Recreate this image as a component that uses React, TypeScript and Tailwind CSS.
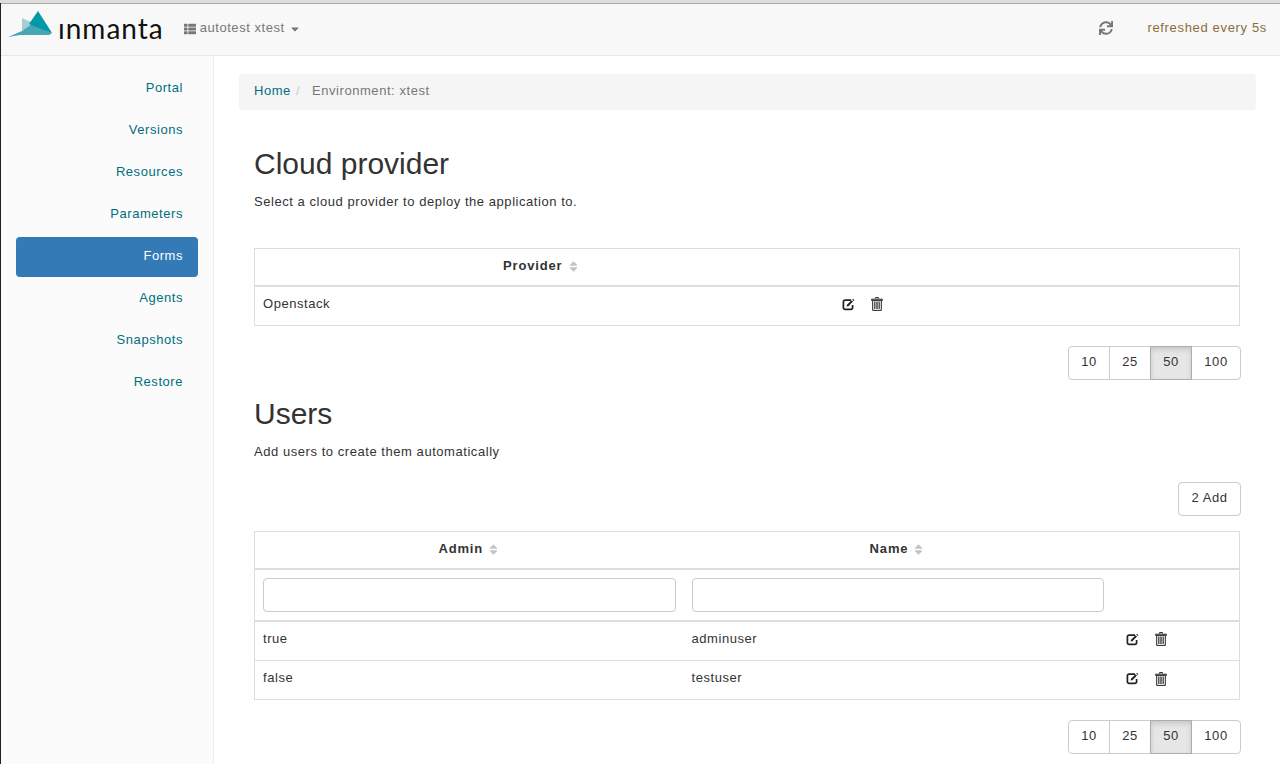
import { FaCaretDown, FaSort, FaSync, FaThList } from "react-icons/fa"

const NAV = ["Portal", "Versions", "Resources", "Parameters", "Forms", "Agents", "Snapshots", "Restore"]

function Logo() {
  return (
    <svg width="46" height="30" viewBox="0 0 46 30" className="mb-[9px] shrink-0">
      <path d="M14 8 L25 13 L19 24 L14 20 Z" fill="#a5cfd6" />
      <path d="M0 27 L14 21 L24 14 L44 23 L41 25 L12 25 Z" fill="#46a6b4" />
      <path d="M21 14 L30 1 L44 23 L28 17 Z" fill="#009aa6" />
    </svg>
  )
}

function EditIcon() {
  return (
    <svg width="13" height="13" viewBox="0 0 13 13" className="text-[#222]">
      <path d="M9 2.2H3a1.6 1.6 0 0 0-1.6 1.6v6A1.6 1.6 0 0 0 3 11.4h6a1.6 1.6 0 0 0 1.6-1.6V7" fill="none" stroke="currentColor" strokeWidth="1.7" />
      <path d="M5 6.8 9.6 2.2 11 3.6 6.4 8.2 4.6 8.6Z" fill="currentColor" />
      <path d="M11 .8 12.4 2.2 11.7 2.9 10.3 1.5Z" fill="currentColor" />
    </svg>
  )
}

function TrashIcon() {
  return (
    <svg width="12" height="14" viewBox="0 0 12 14" className="text-[#222]">
      <path d="M4.5 1.5V.6h3v.9M.6 2.2h10.8v1.2H.6Z" fill="none" stroke="currentColor" strokeWidth="1" />
      <path d="M1.7 4v9.4h8.6V4" fill="none" stroke="currentColor" strokeWidth="1" />
      <path d="M3.7 4.5v7.5M5.2 4.5v7.5M6.8 4.5v7.5M8.3 4.5v7.5" stroke="currentColor" strokeWidth="0.9" />
    </svg>
  )
}

function Actions() {
  return (
    <div className="flex items-center gap-[16px] pb-[3px]">
      <EditIcon />
      <TrashIcon />
    </div>
  )
}

function SortHead({ label }: { label: string }) {
  return (
    <th className="h-[37px] border-b-2 border-[#ddd] pb-[2px] text-center align-middle font-bold tracking-[0.85px] text-[#333]">
      {label}
      <FaSort className="ml-[4px] inline-block align-[-3px] text-[13px] text-[#c4c4c4]" />
    </th>
  )
}

function PageSizes() {
  return (
    <div className="flex h-[34px] justify-end">
      {["10", "25", "50", "100"].map((n) => (
        <button
          key={n}
          className={`-ml-px h-[34px] border pb-[3px] text-[13px] text-[#333] first:rounded-l last:rounded-r ${
            n === "100" ? "w-[50px]" : "w-[42px]"
          } ${
            n === "50"
              ? "z-10 border-[#adadad] bg-[#e6e6e6] shadow-[inset_0_3px_5px_rgba(0,0,0,0.125)]"
              : "border-[#ccc] bg-white"
          }`}
        >
          {n}
        </button>
      ))}
    </div>
  )
}

export default function App() {
  return (
    <div className="h-[764px] overflow-hidden bg-[#ddd] pt-[3px] font-['Liberation_Sans',sans-serif] text-[13px] tracking-[0.55px] text-[#333]">
      <div className="h-[761px] border-l border-[#222] bg-white">
        {/* navbar */}
        <div className="flex h-[53px] items-center border-t border-b border-t-[#aaa] border-b-[#e7e7e7] bg-[#f8f8f8] pr-[13px] pl-[7px]">
          <Logo />
          <span className="mb-[3px] ml-[4px] font-['Lato',sans-serif] text-[28px] leading-none tracking-[1px] text-[#111]">ınmanta</span>
          <div className="ml-[20px] flex items-center gap-[4px] pb-[3px] text-[#777]">
            <FaThList className="mt-[2px] text-[12px]" />
            <span>autotest xtest</span>
            <FaCaretDown className="mt-[2px] text-[12px]" />
          </div>
          <FaSync className="mr-[34px] mb-[4px] ml-auto text-[14px] text-[#777]" />
          <span className="pb-[3px] tracking-[0.66px] text-[#8a6d3b]">refreshed every 5s</span>
        </div>

        <div className="flex h-[708px]">
          {/* sidebar */}
          <div className="w-[213px] shrink-0 border-r border-[#eee] bg-[#fbfbfb] pt-[13px] pr-[15px] pl-[15px]">
            <ul className="flex flex-col gap-[2px]">
              {NAV.map((item) => (
                <li
                  key={item}
                  className={`flex h-[40px] items-center justify-end rounded px-[15px] pb-[3px] ${
                    item === "Forms" ? "bg-[#337ab7] text-white" : "text-[#006e7d]"
                  }`}
                >
                  {item}
                </li>
              ))}
            </ul>
          </div>

          {/* main */}
          <div className="min-w-0 flex-1 pt-[18px] pr-[24px] pl-[25px]">
            <div className="flex h-[36px] items-center rounded bg-[#f5f5f5] px-[15px] pb-[3px]">
              <span className="text-[#006e7d]">Home</span>
              <span className="ml-[5px] text-[#ccc]">/</span>
              <span className="ml-[12px] text-[#777]">Environment: xtest</span>
            </div>

            <div className="pr-[15px] pl-[15px]">
              <h2 className="mt-[37px] text-[30px] leading-[33px] tracking-normal">Cloud provider</h2>
              <p className="mt-[13px] leading-[18px]">Select a cloud provider to deploy the application to.</p>

              <table className="mt-[37px] w-[986px] table-fixed border border-[#ddd]">
                <colgroup>
                  <col className="w-[573px]" />
                  <col />
                </colgroup>
                <thead>
                  <tr>
                    <SortHead label="Provider" />
                    <th className="border-b-2 border-[#ddd]" />
                  </tr>
                </thead>
                <tbody>
                  <tr className="h-[40px]">
                    <td className="px-2 pb-[4px] align-middle">Openstack</td>
                    <td className="pl-[14px] align-middle">
                      <Actions />
                    </td>
                  </tr>
                </tbody>
              </table>

              <div className="mt-[20px]">
                <PageSizes />
              </div>

              <h2 className="mt-[17px] text-[30px] leading-[33px] tracking-normal">Users</h2>
              <p className="mt-[13px] leading-[18px]">Add users to create them automatically</p>

              <div className="mt-[21px] flex justify-end">
                <button className="h-[34px] w-[63px] rounded border border-[#ccc] bg-white pb-[3px] text-[13px] text-[#333]">2 Add</button>
              </div>

              <table className="mt-[15px] w-[986px] table-fixed border border-[#ddd]">
                <colgroup>
                  <col className="w-[429px]" />
                  <col className="w-[428px]" />
                  <col />
                </colgroup>
                <thead>
                  <tr>
                    <SortHead label="Admin" />
                    <SortHead label="Name" />
                    <th className="border-b-2 border-[#ddd]" />
                  </tr>
                </thead>
                <tbody>
                  <tr className="h-[52px] border-b-2 border-[#ddd]">
                    <td className="px-2">
                      <input className="block h-[34px] w-full rounded border border-[#ccc] bg-white" />
                    </td>
                    <td className="px-2">
                      <input className="block h-[34px] w-full rounded border border-[#ccc] bg-white" />
                    </td>
                    <td />
                  </tr>
                  <tr className="h-[40px] border-b border-[#ddd]">
                    <td className="px-2 pb-[5px]">true</td>
                    <td className="px-2 pb-[5px]">adminuser</td>
                    <td className="pl-[14px]">
                      <Actions />
                    </td>
                  </tr>
                  <tr className="h-[39px]">
                    <td className="px-2 pb-[5px]">false</td>
                    <td className="px-2 pb-[5px]">testuser</td>
                    <td className="pl-[14px]">
                      <Actions />
                    </td>
                  </tr>
                </tbody>
              </table>

              <div className="mt-[20px]">
                <PageSizes />
              </div>
            </div>
          </div>
        </div>
      </div>
    </div>
  )
}
